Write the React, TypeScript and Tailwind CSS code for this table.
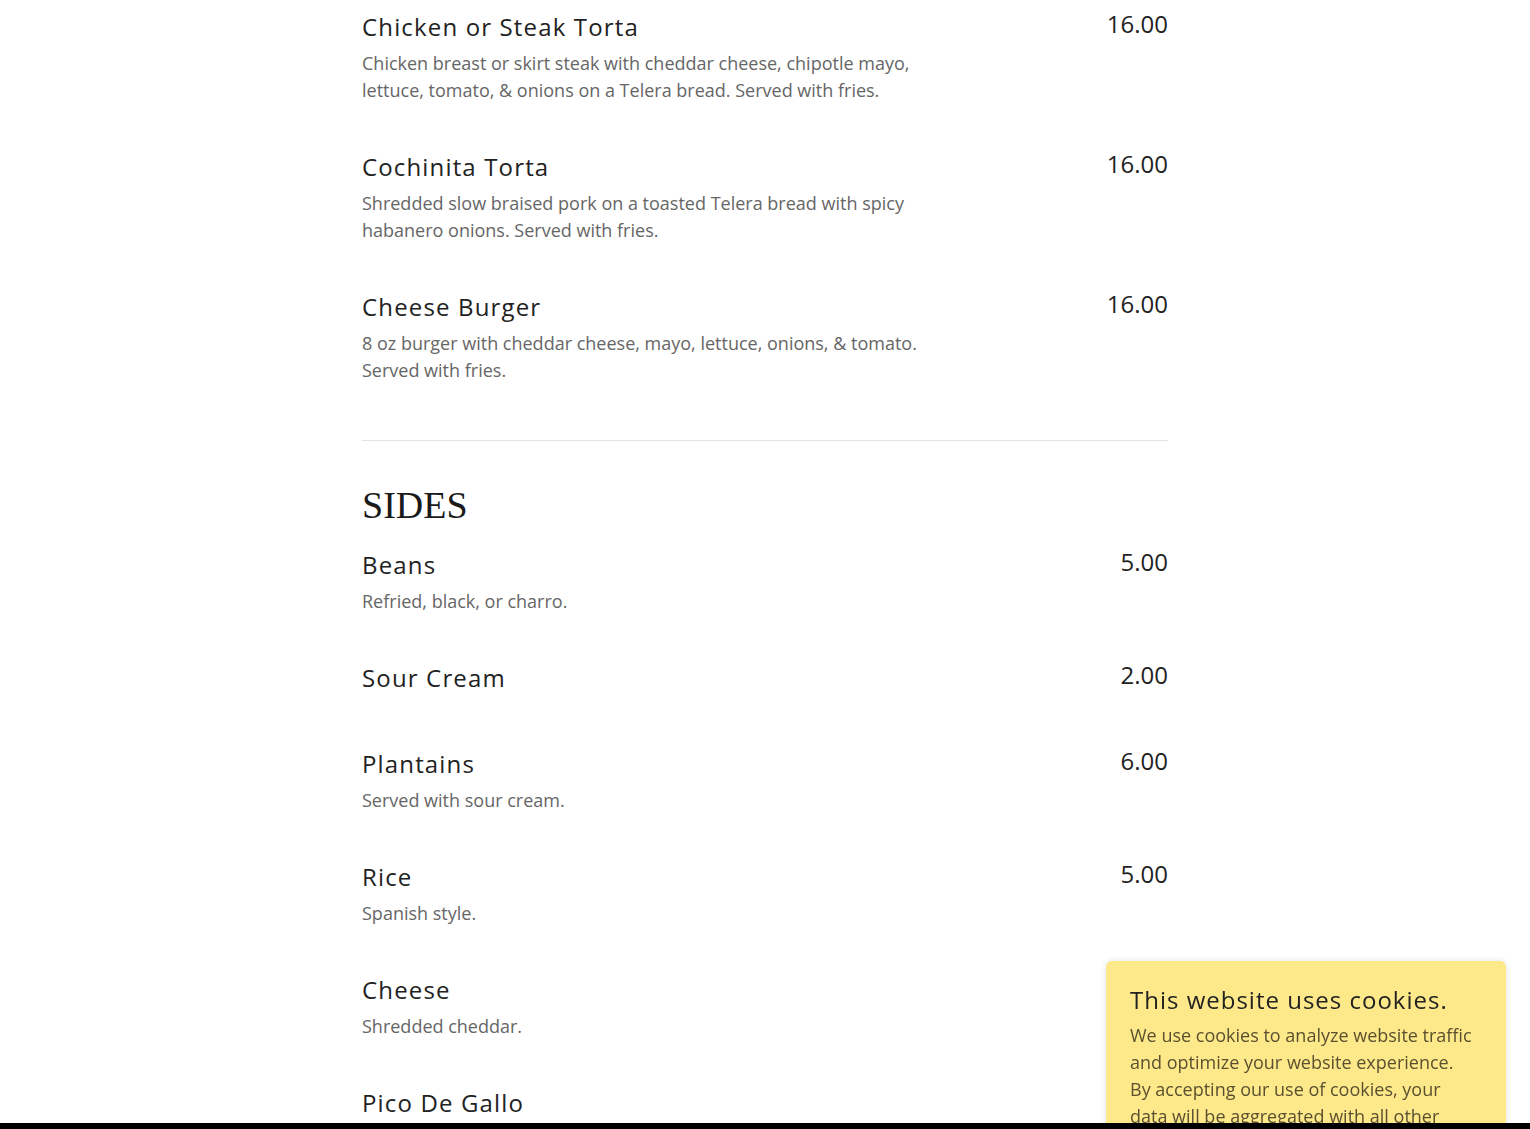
import React from "react";

interface MenuItem {
  name: string;
  price: string;
  desc?: string[];
}

const tortas: MenuItem[] = [
  {
    name: "Chicken or Steak Torta",
    price: "16.00",
    desc: [
      "Chicken breast or skirt steak with cheddar cheese, chipotle mayo,",
      "lettuce, tomato, & onions on a Telera bread. Served with fries.",
    ],
  },
  {
    name: "Cochinita Torta",
    price: "16.00",
    desc: [
      "Shredded slow braised pork on a toasted Telera bread with spicy",
      "habanero onions. Served with fries.",
    ],
  },
  {
    name: "Cheese Burger",
    price: "16.00",
    desc: [
      "8 oz burger with cheddar cheese, mayo, lettuce, onions, & tomato.",
      "Served with fries.",
    ],
  },
];

const sides: MenuItem[] = [
  { name: "Beans", price: "5.00", desc: ["Refried, black, or charro."] },
  { name: "Sour Cream", price: "2.00" },
  { name: "Plantains", price: "6.00", desc: ["Served with sour cream."] },
  { name: "Rice", price: "5.00", desc: ["Spanish style."] },
  { name: "Cheese", price: "3.00", desc: ["Shredded cheddar."] },
  { name: "Pico De Gallo", price: "3.00", desc: ["Fresh tomato, onion, & cilantro."] },
];

const Item: React.FC<{ item: MenuItem }> = ({ item }) => (
  <div className="flex justify-between pb-[45px]">
    <div className="w-[580px]">
      <h3 className="text-[24px] leading-[36px] tracking-[1.15px] text-[#222] mb-[5px]">
        {item.name}
      </h3>
      {item.desc && (
        <p className="text-[18px] leading-[27px] text-[#666]">
          {item.desc.map((line, i) => (
            <React.Fragment key={i}>
              {line}
              {i < item.desc!.length - 1 && <br />}
            </React.Fragment>
          ))}
        </p>
      )}
    </div>
    <div className="text-[24px] leading-[30px] text-[#222]">{item.price}</div>
  </div>
);

const App: React.FC = () => {
  return (
    <div
      className="min-h-screen bg-white"
      style={{ fontFamily: '"Open Sans", "Noto Sans", sans-serif' }}
    >
      <div className="w-[806px] ml-[362px] pt-[9px]">
        {tortas.map((item) => (
          <Item key={item.name} item={item} />
        ))}
        <div className="mt-[11px] border-t border-[#e2e2e2]" />
        <h2
          className="mt-[41px] mb-[19px] text-[38px] leading-[46px] text-[#1a1a1a]"
          style={{ fontFamily: '"Liberation Serif", "DejaVu Serif", serif' }}
        >
          SIDES
        </h2>
        {sides.map((item) => (
          <Item key={item.name} item={item} />
        ))}
      </div>

      <div className="fixed left-[1106px] top-[961px] w-[400px] h-[200px] rounded-[6px] bg-[#fee98a] shadow-[0_0_6px_rgba(0,0,0,0.12)] pl-6 pr-8 pt-[21px]">
        <h4 className="text-[24px] leading-[36px] tracking-[1px] text-[#222]">
          This website uses cookies.
        </h4>
        <p className="mt-[4px] text-[18px] leading-[27px] text-[#5a5030]">
          We use cookies to analyze website traffic and optimize your website
          experience. By accepting our use of cookies, your data will be
          aggregated with all other user data.
        </p>
      </div>

      <div className="fixed left-0 right-0 bottom-0 h-[6px] bg-black" />
    </div>
  );
};

export default App;
